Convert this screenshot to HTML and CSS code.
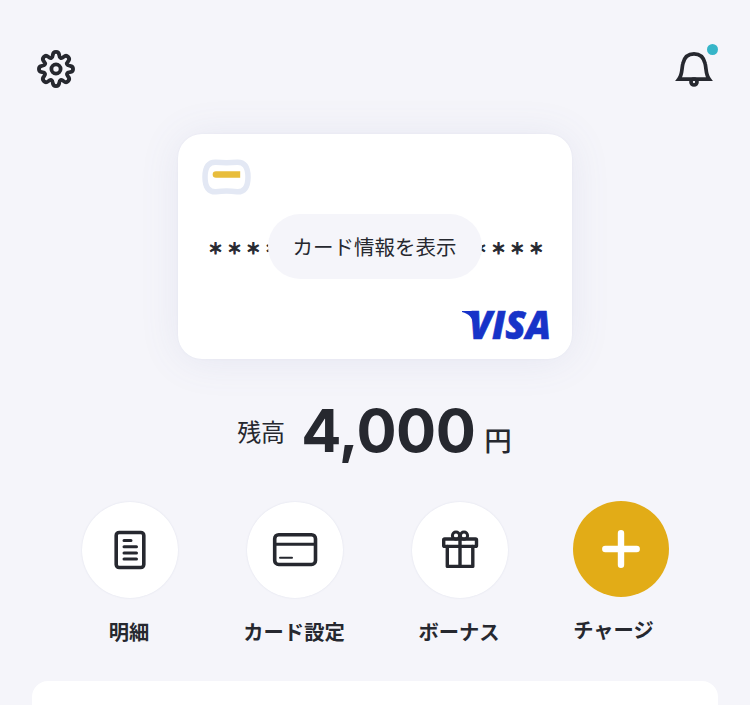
FILE: index.html
```html
<!DOCTYPE html>
<html lang="ja">
<head>
<meta charset="utf-8">
<title>残高</title>
<link rel="stylesheet" href="styles.css">
</head>
<body>
<header class="topbar">
  <svg class="gear" viewBox="0 0 40 40" width="40" height="40">
    <path d="M16.8 6C17.2 1.9 22.8 1.9 23.2 6C23.5 9.4 25.3 10.1 27.6 7.9C30.9 5.1 34.9 9.1 32.1 12.4C29.9 14.7 30.6 16.5 34 16.8C38.1 17.2 38.1 22.8 34 23.2C30.6 23.5 29.9 25.3 32.1 27.6C34.9 30.9 30.9 34.9 27.6 32.1C25.3 29.9 23.5 30.6 23.2 34C22.8 38.1 17.2 38.1 16.8 34C16.5 30.6 14.7 29.9 12.4 32.1C9.1 34.9 5.1 30.9 7.9 27.6C10.1 25.3 9.4 23.5 6 23.2C1.9 22.8 1.9 17.2 6 16.8C9.4 16.5 10.1 14.7 7.9 12.4C5.1 9.1 9.1 5.1 12.4 7.9C14.7 10.1 16.5 9.4 16.8 6Z"/>
    <circle cx="20" cy="20" r="4.6"/>
  </svg>
  <div class="notice">
    <svg class="bell" viewBox="0 0 40 40" width="40" height="40">
      <path d="M4.8 32.2C8.5 27.3 7.5 22 8.9 16.5C10.3 10.4 14.4 6.9 20 6.9C25.6 6.9 29.7 10.4 31.1 16.5C32.5 22 31.5 27.3 35.2 32.2Z"/>
      <circle cx="20" cy="35" r="3"/>
    </svg>
    <span class="dot"></span>
  </div>
</header>

<section class="card">
  <svg class="chip" viewBox="0 0 50 36" width="50" height="36">
    <path class="chip-frame" d="M14 3.2C21 3.8 28 3.8 35 3.2C42 2.8 46 7.5 46 18C46 28.5 42 33.2 35 32.8C28 31.6 21 31.6 14 32.8C7 33.2 3 28.5 3 18C3 7.5 7 2.8 14 3.2Z"/>
    <path class="chip-bar" d="M14 12.2H38.2V18.8H14A3.3 3.3 0 0 1 14 12.2Z"/>
  </svg>
  <div class="number"><span>＊＊＊＊</span><button class="reveal">カード情報を表示</button><span>＊＊＊＊</span></div>
  <svg class="visa" viewBox="0 0 90 32" width="90" height="32">
    <path d="M1 2H14L17 10L12 14C11 8 8 5 1 3Z"/>
    <text x="8" y="30" textLength="82" lengthAdjust="spacingAndGlyphs">VISA</text>
  </svg>
</section>

<section class="balance">
  <span class="label">残高</span><strong class="amount">4,000</strong><span class="yen">円</span>
</section>

<nav class="actions">
  <a class="action">
    <span class="disc"><svg viewBox="0 0 48 48" width="48" height="48">
      <rect x="10.2" y="6.5" width="27.6" height="35" rx="3" stroke-width="3.6"/>
      <path d="M18 14.5h7M18 20.7h12.5M18 26.9h12.5M18 33.1h12.5" stroke-width="3"/>
    </svg></span>
    <span class="caption">明細</span>
  </a>
  <a class="action">
    <span class="disc"><svg viewBox="0 0 48 48" width="48" height="48">
      <rect x="3.7" y="8.7" width="40.8" height="29.8" rx="4" stroke-width="3.6"/>
      <path d="M4 18.3h40" stroke-width="3"/>
      <path d="M9 31.7h12" stroke-width="2"/>
    </svg></span>
    <span class="caption">カード設定</span>
  </a>
  <a class="action">
    <span class="disc"><svg viewBox="0 0 48 48" width="48" height="48">
      <rect x="7.7" y="13" width="32.8" height="7.4" rx="1" stroke-width="3.4"/>
      <path d="M11.3 20.5V40.4H36.8V20.5M24 12V40" stroke-width="3.4"/>
      <circle cx="20" cy="9.7" r="3.6" stroke-width="3"/>
      <circle cx="28" cy="9.7" r="3.6" stroke-width="3"/>
    </svg></span>
    <span class="caption">ボーナス</span>
  </a>
  <a class="action charge">
    <span class="disc"><svg viewBox="0 0 48 48" width="48" height="48">
      <path d="M24 8.3V39.7M8.3 24H39.7" stroke-width="6.4"/>
    </svg></span>
    <span class="caption">チャージ</span>
  </a>
</nav>

<main class="sheet"></main>
</body>
</html>
```
FILE: styles.css
```css
* { box-sizing: border-box; }

body {
  margin: 0;
  height: 705px;
  overflow: hidden;
  display: flex;
  flex-direction: column;
  align-items: center;
  background: #f5f5fa;
  color: #26282f;
  font-family: "Noto Sans CJK JP", sans-serif;
}

svg { display: block; overflow: visible; }

.topbar {
  width: 100%;
  height: 134px;
  flex: none;
  padding: 49px 36px 0;
  display: flex;
  justify-content: space-between;
}

.gear, .bell {
  fill: none;
  stroke: #26282f;
  stroke-width: 3.8;
  stroke-linejoin: round;
}

.bell { stroke-width: 3.7; stroke-linejoin: miter; }
.notice { position: relative; margin-top: -2px; }

.dot {
  position: absolute;
  top: -3px;
  right: -4px;
  width: 11px;
  height: 11px;
  border-radius: 50%;
  background: #36b5c8;
}

.card {
  width: 394px;
  height: 225px;
  flex: none;
  padding: 25px 22px 19px 24px;
  border-radius: 24px;
  background: #fff;
  box-shadow: 0 0 2px rgba(100, 110, 170, .08), 0 2px 40px rgba(100, 110, 170, .1);
  display: flex;
  flex-direction: column;
}

.chip-frame { fill: none; stroke: #e3e8f4; stroke-width: 5.5; }
.chip-bar { fill: #e8bd3c; }

.number {
  height: 65px;
  margin-top: 19px;
  padding-left: 6px;
  display: flex;
  align-items: center;
}

.number span {
  flex: none;
  padding-top: 2px;
  font: 700 15px/32px "Noto Sans CJK JP", sans-serif;
  letter-spacing: 3.9px;
  -webkit-text-stroke: .9px #26282f;
  white-space: nowrap;
}

.reveal {
  position: relative;
  width: 214px;
  height: 65px;
  flex: none;
  margin: 0 -10px 0 -15.6px;
  padding: 0 1px 2px 0;
  border: 0;
  border-radius: 33px;
  background: #f5f5fa;
  color: inherit;
  font: 400 20.5px/30px "Noto Sans CJK JP", sans-serif;
}

.visa { margin: auto -1px -1px auto; fill: #1733c8; }
.visa text { font: italic 800 39px "Open Sans", sans-serif; stroke: #1733c8; stroke-width: .6; }

.balance {
  height: 142px;
  flex: none;
  padding-top: 37px;
  display: flex;
  align-items: baseline;
}

.label { font-size: 24px; margin-right: 16px; position: relative; top: -12px; }
.amount { font: 700 59.5px/70px Inter, sans-serif; letter-spacing: -.5px; position: relative; top: -1px; }
.yen { font-size: 27.5px; font-weight: 500; margin: 0 1px 0 9px; position: relative; top: -2px; }

.actions {
  width: 100%;
  height: 180px;
  flex: none;
  padding-left: 47.5px;
  display: flex;
}

.action {
  width: 165px;
  display: flex;
  flex-direction: column;
  align-items: center;
  padding-top: 1px;
}

.disc {
  width: 96px;
  height: 96px;
  border-radius: 50%;
  background: #fff;
  box-shadow: 0 0 2px rgba(80, 90, 140, .14);
  display: grid;
  place-items: center;
}

.disc svg {
  fill: none;
  stroke: #26282f;
  stroke-linecap: round;
  stroke-linejoin: round;
}

.caption {
  margin-top: 18px;
  padding-right: 2px;
  font-size: 20.3px;
  line-height: 30px;
  font-weight: 700;
  white-space: nowrap;
}

.charge { width: 156px; padding-top: 0; }
.charge .disc { background: #e2ac17; box-shadow: none; }
.charge .disc svg { stroke: #fff; }
.charge .caption { margin-top: 17px; padding-right: 14px; }

.sheet {
  width: 686px;
  height: 24px;
  flex: none;
  border-radius: 16px 16px 0 0;
  background: #fff;
}
```
